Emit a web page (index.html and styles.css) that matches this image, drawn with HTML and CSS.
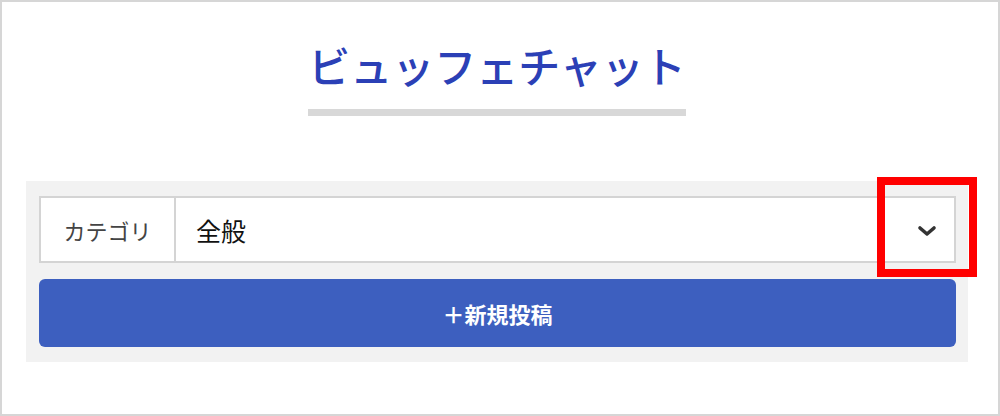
FILE: index.html
```html
<!DOCTYPE html>
<html lang="ja">
<head>
    <meta charset="UTF-8">
    <meta name="viewport" content="width=device-width, initial-scale=1.0">
    <title>ビュッフェチャット</title>
    <link rel="stylesheet" href="styles.css">
</head>
<body>
    <div class="frame">
        <div class="heading">
            <h1>ビュッフェチャット</h1>
        </div>

        <div class="post-panel">
            <div class="category-row">
                <div class="category-label">カテゴリ</div>
                <div class="category-select">
                    <span>全般</span>
                    <svg class="chevron" width="22" height="14" viewBox="0 0 22 14">
                        <path d="M4 4 L11 10 L18 4" fill="none" stroke="#333" stroke-width="3.6" stroke-linecap="round" stroke-linejoin="round"/>
                    </svg>
                </div>
            </div>
            <button class="new-post">＋新規投稿</button>

            <div class="highlight"></div>
        </div>
    </div>
</body>
</html>
```

FILE: styles.css
```css
body {
    margin: 0;
    font-family: "Noto Sans CJK JP", "Noto Sans", sans-serif;
    background: #fff;
}
.frame {
    width: 1000px;
    height: 416px;
    box-sizing: border-box;
    border: 2px solid #d6d6d6;
    padding-top: 41px;
}
.heading {
    width: 942px;
    margin-left: 24px;
    text-align: center;
}
h1 {
    display: inline-block;
    margin: 0;
    padding: 0 0 22px;
    font-size: 42px;
    line-height: 44px;
    font-weight: 500;
    color: #2b40b6;
    border-bottom: 7px solid #d8d8d8;
}
.post-panel {
    position: relative;
    width: 942px;
    box-sizing: border-box;
    margin: 65px 0 0 24px;
    padding: 15px 12px 15px 13px;
    background: #f2f2f2;
}
.category-row {
    display: flex;
    height: 67px;
    box-sizing: border-box;
    border: 2px solid #d4d4d4;
    background: #fff;
}
.category-label {
    width: 133px;
    border-right: 2px solid #d4d4d4;
    display: flex;
    align-items: center;
    justify-content: center;
    font-size: 22px;
    color: #444;
}
.category-select {
    flex: 1;
    display: flex;
    align-items: center;
    justify-content: space-between;
    padding: 0 16px 0 20px;
    font-size: 25px;
    color: #111;
}
.chevron {
    margin-top: 2px;
}
.new-post {
    display: block;
    width: 100%;
    height: 68px;
    margin-top: 16px;
    border: none;
    border-radius: 6px;
    background: #3d5fbf;
    color: #fff;
    font-family: inherit;
    font-size: 22px;
    font-weight: 700;
    cursor: pointer;
}
.highlight {
    position: absolute;
    left: 851px;
    top: -4px;
    width: 100px;
    height: 100px;
    box-sizing: border-box;
    border: 8px solid #ff0000;
}
```
